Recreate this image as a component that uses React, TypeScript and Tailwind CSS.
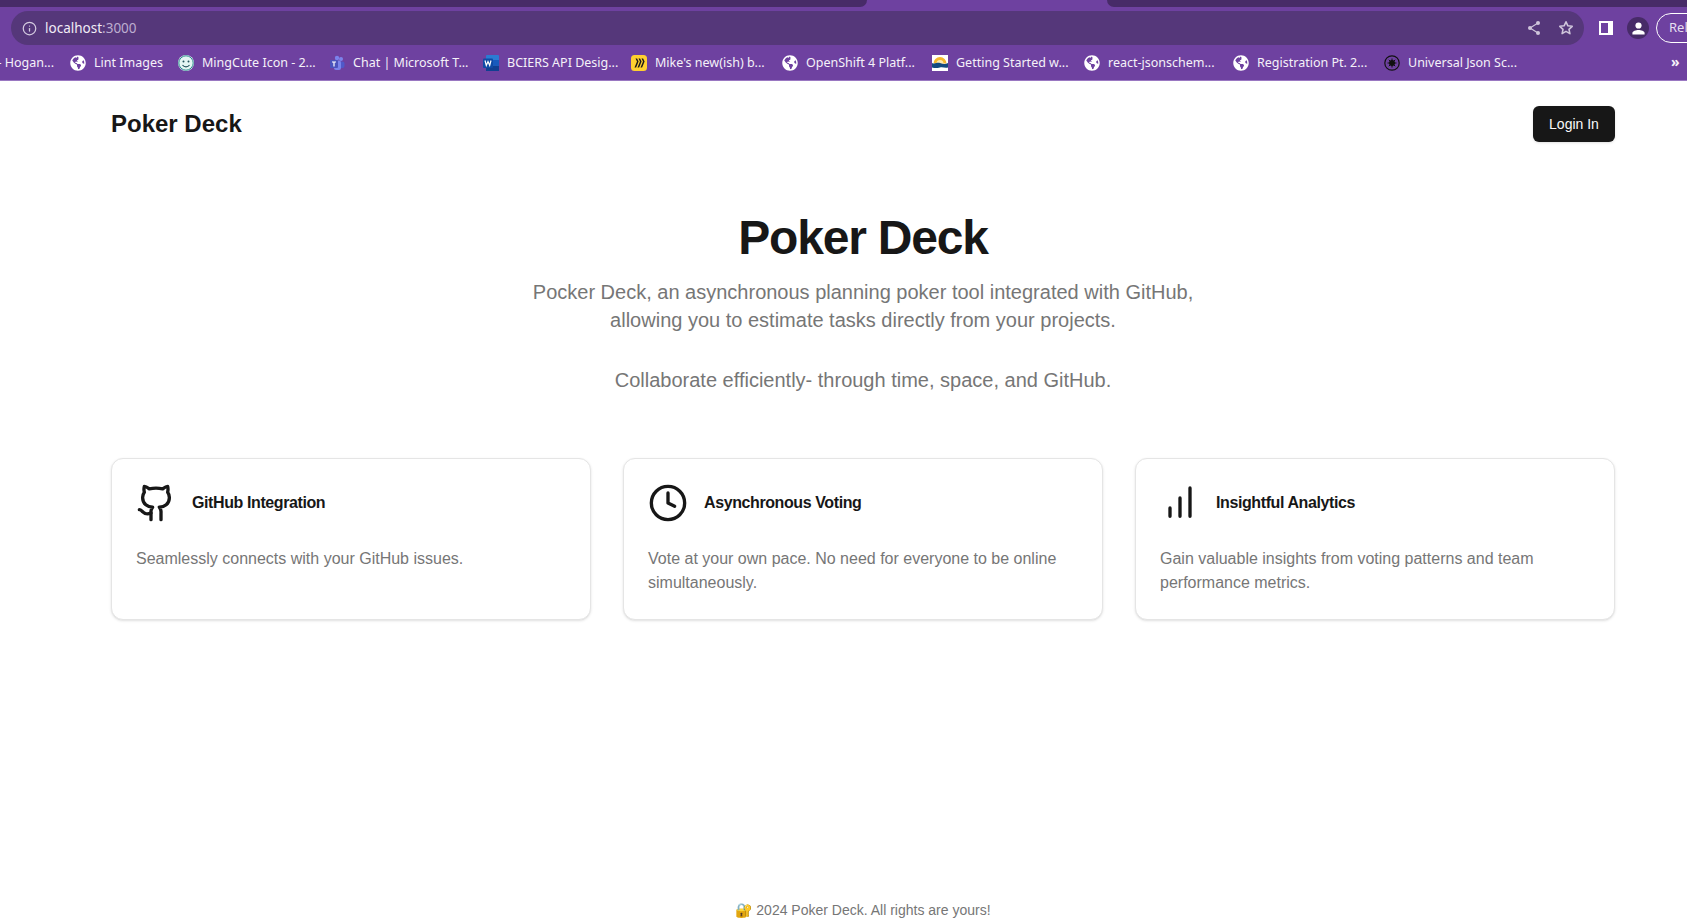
import React from 'react';
import { Clock, Github, Info } from 'lucide-react';
import { FaGlobeAmericas } from 'react-icons/fa';

const Globe = () => <FaGlobeAmericas className="w-4 h-4 text-white shrink-0" />;

const Smiley = () => (
  <svg viewBox="0 0 16 16" className="w-4 h-4 shrink-0">
    <circle cx="8" cy="8" r="8" fill="#e4f5f3" />
    <circle cx="8" cy="8" r="7.2" fill="none" stroke="#2f8f8f" strokeWidth="1" />
    <circle cx="5.5" cy="6.5" r="1" fill="#22505a" />
    <circle cx="10.5" cy="6.5" r="1" fill="#22505a" />
    <path d="M4.5 10c1.8 2.4 5.2 2.4 7 0" fill="none" stroke="#22505a" strokeWidth="1.2" />
  </svg>
);

const Teams = () => (
  <svg viewBox="0 0 16 16" className="w-4 h-4 shrink-0">
    <circle cx="12" cy="4" r="2" fill="#7b83eb" />
    <rect x="9" y="6.5" width="6.5" height="6.5" rx="2" fill="#5059c9" />
    <circle cx="8" cy="3" r="2.2" fill="#7b83eb" />
    <rect x="5" y="5.5" width="7" height="9.5" rx="2" fill="#7b83eb" />
    <rect x="1" y="5" width="8" height="8" rx="1" fill="#4b53bc" />
    <path d="M3 7h4M5 7v4.5" stroke="#fff" strokeWidth="1.2" />
  </svg>
);

const Word = () => (
  <svg viewBox="0 0 16 16" className="w-4 h-4 shrink-0">
    <rect x="3" y="0" width="13" height="16" rx="1" fill="#2b7cd3" />
    <rect x="3" y="10.5" width="13" height="5.5" fill="#103f91" />
    <rect x="3" y="5" width="13" height="5.5" fill="#185abd" />
    <rect x="0" y="3.5" width="10" height="9.5" rx="1" fill="#0f4aa5" />
    <path d="M2 5.5l1.3 5 1.7-4 1.7 4 1.3-5" fill="none" stroke="#fff" strokeWidth="1.2" />
  </svg>
);

const Miro = () => (
  <svg viewBox="0 0 16 16" className="w-4 h-4 shrink-0">
    <rect width="16" height="16" rx="3.5" fill="#ffd02f" />
    <path d="M4.5 3.500l1.500 3-2.500 6h1.600l2.500-6-1.500-3zM7.500 3.500l1.500 3-2.500 6h1.600l2.500-6-1.500-3zM10.500 3.500l1.500 3-2.500 6h1.600l2.500-6-1.500-3z" fill="#1c1917" />
  </svg>
);

const BcGov = () => (
  <svg viewBox="0 0 16 16" className="w-4 h-4 shrink-0">
    <rect width="16" height="16" fill="#ffffff" />
    <path d="M1.500 8.500a6.500 6.500 0 0 1 13 0z" fill="#f5b82e" />
    <path d="M4.500 8.500a3.500 3.500 0 0 1 7 0z" fill="#fbe7b0" />
    <path d="M0 8c3 1.500 5-1 8 0s5 1.500 8 0v4.500c-3 .8-5-.6-8 0s-5 .8-8 0z" fill="#124a80" />
  </svg>
);

const JsonSchema = () => (
  <svg viewBox="0 0 16 16" className="w-4 h-4 shrink-0">
    <circle cx="8" cy="8" r="7.2" fill="none" stroke="#111" strokeWidth="1.2" />
    <circle cx="8" cy="8" r="3" fill="#111" />
    <path d="M8 3.500v9M3.500 8h9M4.800 4.800l6.400 6.400M11.200 4.800l-6.400 6.400" stroke="#111" strokeWidth="1" />
  </svg>
);

const ShareNodes = () => (
  <svg viewBox="0 0 16 16" className="w-4 h-4" fill="currentColor" stroke="currentColor">
    <path d="M12 3 4 8l8 5" fill="none" strokeWidth="1.2" />
    <circle cx="12" cy="3" r="2" stroke="none" />
    <circle cx="4" cy="8" r="2" stroke="none" />
    <circle cx="12" cy="13" r="2" stroke="none" />
  </svg>
);

const StarOutline = () => (
  <svg viewBox="0 0 16 16" className="w-4 h-4" fill="none" stroke="currentColor" strokeWidth="1.6" strokeLinejoin="round">
    <path d="M8 1.800l1.900 4 4.300.5-3.200 3 .9 4.300L8 11.400l-3.900 2.200.9-4.300-3.200-3 4.300-.5z" />
  </svg>
);

const Avatar = () => (
  <svg viewBox="0 0 16 16" className="w-[15px] h-[15px]" fill="#fff">
    <circle cx="8" cy="4.800" r="3.300" />
    <path d="M1.500 14.500v-1.700c0-2.200 3.800-3.300 6.500-3.300s6.500 1.100 6.500 3.300v1.700z" />
  </svg>
);

const bookmarks = [
  { icon: <Globe />, label: 'Lint Images', width: 'w-[68px]' },
  { icon: <Smiley />, label: 'MingCute Icon - 2...', width: 'w-[111px]' },
  { icon: <Teams />, label: 'Chat | Microsoft T...', width: 'w-[114px]' },
  { icon: <Word />, label: 'BCIERS API Desig...', width: 'w-[108px]' },
  { icon: <Miro />, label: "Mike's new(ish) b...", width: 'w-[111px]' },
  { icon: <Globe />, label: 'OpenShift 4 Platf...', width: 'w-[110px]' },
  { icon: <BcGov />, label: 'Getting Started w...', width: 'w-[112px]' },
  { icon: <Globe />, label: 'react-jsonschem...', width: 'w-[109px]' },
  { icon: <Globe />, label: 'Registration Pt. 2...', width: 'w-[111px]' },
  { icon: <JsonSchema />, label: 'Universal Json Sc...', width: 'w-[111px]' },
];

const Analytics = () => (
  <svg viewBox="0 0 24 24" className="w-10 h-10 shrink-0" fill="none" stroke="currentColor" strokeWidth="2" strokeLinecap="round">
    <path d="M6 20v-5M12 20V9M18 20V3" />
  </svg>
);

const features = [
  {
    icon: <Github className="w-10 h-10 shrink-0" />,
    title: 'GitHub Integration',
    text: 'Seamlessly connects with your GitHub issues.',
  },
  {
    icon: <Clock className="w-10 h-10 shrink-0" />,
    title: 'Asynchronous Voting',
    text: 'Vote at your own pace. No need for everyone to be online simultaneously.',
  },
  {
    icon: <Analytics />,
    title: 'Insightful Analytics',
    text: 'Gain valuable insights from voting patterns and team performance metrics.',
  },
];

const BrowserChrome = () => (
  <div className="bg-[#6e41a0] font-['Noto_Sans',sans-serif] text-white">
    <div className="flex h-[7px]">
      <div className="w-[867px] bg-[#472b68] rounded-br-lg" />
      <div className="w-[240px]" />
      <div className="flex-1 bg-[#472b68] rounded-bl-lg" />
    </div>
    <div className="flex items-center h-[42px] pl-[11px] overflow-hidden">
      <div className="flex items-center shrink-0 w-[1573px] h-[34px] rounded-full bg-[#55377a] pl-[11px] pr-[10px]">
        <Info className="w-[15px] h-[15px] text-[#d5cbe0]" />
        <span className="ml-[8px] text-[13.5px] text-[#f1ecf6]">
          localhost<span className="text-[#bdaed0]">:3000</span>
        </span>
        <div className="ml-auto flex items-center gap-[16px] text-[#cfc5db]">
          <ShareNodes />
          <StarOutline />
        </div>
      </div>
      <div className="ml-[15px] w-[14px] h-[14px] border-2 border-white border-r-[5px] shrink-0" />
      <div className="ml-[14px] w-[22px] h-[22px] rounded-full bg-[#472b68] flex items-center justify-center shrink-0">
        <Avatar />
      </div>
      <div className="ml-[7px] h-[30px] w-[60px] shrink-0 rounded-l-full border border-white pl-3 flex items-center text-[13px] text-[#e6dff0]">
        Rel
      </div>
    </div>
    <div className="flex items-center h-[32px] pb-[3px] border-b border-[#9a78c2] text-[12.5px] text-[#f5f1f9] whitespace-nowrap relative">
      <div className="w-[54px] flex justify-end shrink-0">- Hogan...</div>
      {bookmarks.map((b) => (
        <div key={b.label} className="flex items-center gap-2 ml-4 shrink-0">
          {b.icon}
          <span className={b.width}>{b.label}</span>
        </div>
      ))}
      <span className="absolute left-[1671px] top-[5px] text-[14px] leading-4 font-bold">»</span>
    </div>
  </div>
);

export default function App() {
  return (
    <div className="h-screen overflow-hidden bg-white font-['Liberation_Sans',sans-serif] text-[#171717]">
      <BrowserChrome />
      <div className="ml-[111px] w-[1504px]">
        <nav className="flex items-center justify-between h-[85px]">
          <h1 className="text-2xl font-bold">Poker Deck</h1>
          <button className="h-9 w-[82px] rounded-md bg-[#171717] text-sm text-[#fafafa] shadow">Login In</button>
        </nav>
        <section className="pt-[48px] text-center">
          <h2 className="text-5xl leading-[48px] font-bold tracking-tight mb-4">Poker Deck</h2>
          <p className="text-xl leading-7 text-[#767676]">
            Pocker Deck, an asynchronous planning poker tool integrated with GitHub,
            <br />
            allowing you to estimate tasks directly from your projects.
          </p>
          <p className="mt-8 text-xl leading-7 text-[#767676]">Collaborate efficiently- through time, space, and GitHub.</p>
        </section>
        <div className="grid grid-cols-3 gap-8 mt-[64px]">
          {features.map((f) => (
            <div key={f.title} className="h-[162px] rounded-xl border border-[#e5e5e5] bg-white p-6 shadow">
              <div className="flex items-center gap-[16px]">
                {f.icon}
                <h3 className="text-base font-semibold tracking-tight">{f.title}</h3>
              </div>
              <p className="mt-[24px] text-base leading-6 text-[#767676]">{f.text}</p>
            </div>
          ))}
        </div>
        <footer className="mt-[280px] text-center text-sm leading-5 text-[#767676]">🔐 2024 Poker Deck. All rights are yours!</footer>
      </div>
    </div>
  );
}
